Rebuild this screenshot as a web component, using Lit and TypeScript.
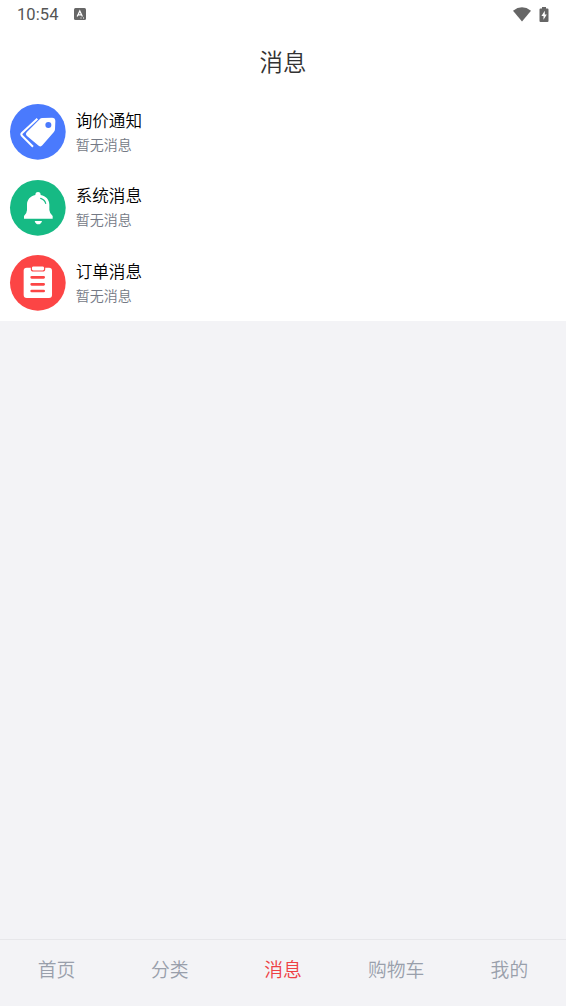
import { LitElement, html, css, svg } from "lit";
import { customElement, property } from "lit/decorators.js";

const glyphs = {
  tag: svg`<svg viewBox="30 28 167 167">
    <circle cx="113.5" cy="111.5" r="83.5" fill="#4a7afd"/>
    <path d="M112 72 L66 115 Q62 119 66 123 L99 156" fill="none" stroke="#fff" stroke-width="6"/>
    <path d="M127 70 L156 69 Q166 69 166 79 L165 103 Q165 108 161 113 L127 152 Q122 158 116 153 L80 123 Q75 118 80 113 L119 74 Q122 70 127 70Z" fill="#fff"/>
    <circle cx="145" cy="91" r="9" fill="#4a7afd"/>
  </svg>`,
  bell: svg`<svg viewBox="30 29 167 167">
    <circle cx="113.5" cy="112.5" r="83.5" fill="#16ba84"/>
    <path d="M106 74 Q106 65 114 65 Q122 65 122 74 C138 77 148 88 148 103 V119 Q148 127 158 137 V145 H72 V137 Q81 128 81 119 V103 C81 88 91 77 106 74Z" fill="#fff"/>
    <path d="M122 84 Q134 88 137 99" fill="none" stroke="#16ba84" stroke-width="3.5" stroke-linecap="round"/>
    <path d="M104 152 H126 Q123 162 115 162 Q107 162 104 152Z" fill="#fff"/>
  </svg>`,
  order: svg`<svg viewBox="30 31 167 167">
    <circle cx="113.5" cy="114.5" r="83.5" fill="#fc4545"/>
    <rect x="71" y="69" width="85" height="91" rx="9" fill="#fff"/>
    <rect x="94" y="64" width="40" height="15" rx="6" fill="#fff" stroke="#fc4545" stroke-width="3.5"/>
    <path d="M95 98 H131 M95 119 H131 M95 139 H131" stroke="#fc4545" stroke-width="8" stroke-linecap="round"/>
  </svg>`,
};

@customElement("message-row")
class MessageRow extends LitElement {
  @property() icon: keyof typeof glyphs = "tag";
  @property() name = "";
  @property() note = "";
  static styles = css`
    :host { display: flex; align-items: center; height: 75.5px; padding: 0 10px; box-sizing: border-box; gap: 10px; }
    svg { display: block; width: 55.7px; height: 55.7px; flex: none; overflow: visible; }
    .text { display: flex; flex-direction: column; padding-bottom: 1px; }
    .name { font-size: 16.6px; line-height: 25px; color: #000; }
    .note { font-size: 14px; line-height: 23px; color: #747985; }
  `;
  render() {
    return html`${glyphs[this.icon]}
      <div class="text"><div class="name">${this.name}</div><div class="note">${this.note}</div></div>`;
  }
}

@customElement("app-root")
class AppRoot extends LitElement {
  static styles = css`
    :host { display: flex; flex-direction: column; height: 100vh; overflow: hidden; background: #f3f3f6;
      font-family: "Noto Sans CJK SC", sans-serif; font-weight: 350; }
    .status { display: flex; align-items: center; height: 29px; padding: 0 17px 0 17px; background: #fff; box-sizing: border-box; }
    .time { font: 400 16.5px/29px Roboto, sans-serif; color: #555; width: 57px; letter-spacing: 0.1px; }
    .status svg { display: block; margin-bottom: 1px; }
    .space { flex: 1; }
    .status .wifi { margin-right: 8px; }
    .title { height: 65.5px; line-height: 65.5px; text-align: center; font-size: 23.5px; color: #333; background: #fff; }
    .list { background: #fff; height: 226.5px; }
    .body { flex: 1; }
    .tabs { display: grid; grid-template-columns: repeat(5, 1fr); height: 67px; box-sizing: border-box; border-top: 1px solid #e7e7ea; }
    .tab { text-align: center; font-size: 18.8px; line-height: 58px; color: #999fab; }
    .active { color: #ee4044; }
  `;
  render() {
    return html`
      <div class="status">
        <span class="time">10:54</span>
        <svg width="12" height="12" viewBox="0 0 12 12"><rect width="12" height="12" rx="1.5" fill="#666"/><path d="M3.2 8.6 L5.8 3 L8.4 8.6 M4.2 6.8 H7.5" fill="none" stroke="#fff" stroke-width="1.2"/><path d="M6.5 10 H7.5 M9 10 H10" stroke="#fff"/></svg>
        <span class="space"></span>
        <svg class="wifi" width="18" height="15" viewBox="0 0 18 15"><path d="M0 3.7 Q9 -3 18 3.7 L9 14.5Z" fill="#666"/></svg>
        <svg width="10" height="15" viewBox="0 0 10 15"><path d="M3 0 H7 V1.5 H8.5 Q9.5 1.5 9.5 2.5 V14 Q9.5 15 8.5 15 H1.5 Q.5 15 .5 14 V2.5 Q.5 1.5 1.5 1.5 H3Z" fill="#666"/><path d="M5.8 3.8 L2.4 9 H4.5 V12.8 L7.8 7.6 H5.8Z" fill="#fff"/></svg>
      </div>
      <div class="title">消息</div>
      <div class="list">
        <message-row icon="tag" name="询价通知" note="暂无消息"></message-row>
        <message-row icon="bell" name="系统消息" note="暂无消息"></message-row>
        <message-row icon="order" name="订单消息" note="暂无消息"></message-row>
      </div>
      <div class="body"></div>
      <div class="tabs">
        ${["首页", "分类", "消息", "购物车", "我的"].map(
          (t) => html`<div class="tab ${t === "消息" ? "active" : ""}">${t}</div>`
        )}
      </div>`;
  }
}
